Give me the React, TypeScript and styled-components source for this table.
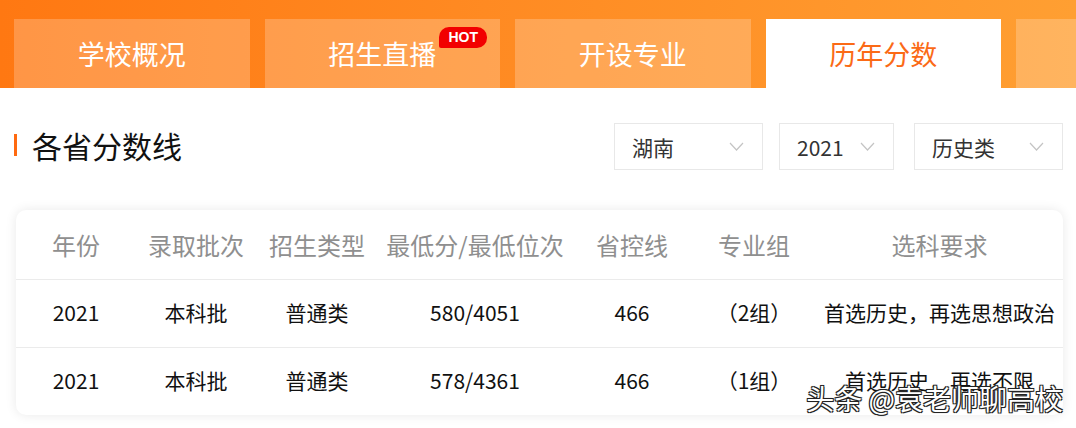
import React from "react";
import styled, { createGlobalStyle } from "styled-components";

const GlobalStyle = createGlobalStyle`
  html, body {
    margin: 0;
    padding: 0;
    background: #fff;
    font-family: "Noto Sans CJK SC", "Noto Sans", sans-serif;
  }
`;

const Page = styled.div`
  position: relative;
  width: 1076px;
  height: 428px;
  overflow: hidden;
  background: #fff;
`;

const TabBar = styled.div`
  display: flex;
  gap: 15px;
  height: 88px;
  padding: 19px 0 0 14px;
  box-sizing: border-box;
  background: linear-gradient(90deg, #ff7812 0%, #ff8a22 45%, #ff9f32 100%);
  overflow: hidden;
`;

const Tab = styled.div<{ $active?: boolean }>`
  position: relative;
  flex: 0 0 235.5px;
  display: flex;
  align-items: center;
  justify-content: center;
  font-size: 27px;
  color: ${(p) => (p.$active ? "#fb6a16" : "#fff")};
  background: ${(p) => (p.$active ? "#fff" : "rgba(255, 255, 255, 0.22)")};
`;

const Hot = styled.span`
  position: absolute;
  top: 8px;
  right: 13px;
  padding: 0 9px;
  height: 21px;
  line-height: 21px;
  font-family: "Liberation Sans", Arial, sans-serif;
  font-weight: 700;
  font-size: 14px;
  color: #fff;
  background: #f20000;
  border-radius: 10px 10px 10px 2px;
`;

const Section = styled.div`
  padding: 35px 13px 0 14px;
`;

const HeadRow = styled.div`
  display: flex;
  align-items: center;
  height: 47px;
`;

const Title = styled.h2`
  flex: 1;
  margin: -4px 0 0;
  display: flex;
  align-items: center;
  gap: 15px;
  font-size: 30px;
  font-weight: 400;
  color: #111;
  &::before {
    content: "";
    width: 3px;
    height: 22px;
    background: #ff6a10;
  }
`;

const Filters = styled.div`
  display: flex;
  gap: 16px;
`;

const Select = styled.div<{ $w: number; $gap?: number }>`
  width: ${(p) => p.$w}px;
  height: 47px;
  margin-left: ${(p) => p.$gap ?? 0}px;
  box-sizing: border-box;
  border: 1px solid #e8e8e8;
  display: flex;
  align-items: center;
  justify-content: space-between;
  padding: 0 18px 0 17px;
  font-size: 21px;
  color: #333;
`;

const Chevron = () => (
  <svg width="15" height="9" viewBox="0 0 15 9" fill="none">
    <path d="M1 1l6.5 7L14 1" stroke="#c4c4c4" strokeWidth="1.2" />
  </svg>
);

const Card = styled.div`
  margin: 40px 0 0 2px;
  width: 1047px;
  background: #fff;
  border-radius: 10px;
  box-shadow: 0 0 12px rgba(0, 0, 0, 0.09);
  overflow: hidden;
`;

const Row = styled.div<{ $head?: boolean }>`
  display: grid;
  grid-template-columns: 120px 120px 122px 194px 120px 124px 1fr;
  align-items: center;
  height: ${(p) => (p.$head ? 69 : 68)}px;
  padding-bottom: ${(p) => (p.$head ? 0 : 3)}px;
  box-sizing: border-box;
  border-top: ${(p) => (p.$head ? "none" : "1px solid #ebebeb")};
  font-size: ${(p) => (p.$head ? 24 : 21)}px;
  color: ${(p) => (p.$head ? "#8f8f8f" : "#111")};
`;

const Cell = styled.div`
  text-align: center;
  white-space: nowrap;
`;

const Watermark = styled.div`
  position: absolute;
  right: 13px;
  bottom: 10px;
  font-size: 28px;
  color: #fff;
  text-shadow: -1px -1px 0 #222, 1px -1px 0 #222, -1px 1px 0 #222, 1px 1px 0 #222,
    0 0 2px #000;
`;

const tabs = ["学校概况", "招生直播", "开设专业", "历年分数", ""];
const heads = ["年份", "录取批次", "招生类型", "最低分/最低位次", "省控线", "专业组", "选科要求"];
const rows = [
  ["2021", "本科批", "普通类", "580/4051", "466", "（2组）", "首选历史，再选思想政治"],
  ["2021", "本科批", "普通类", "578/4361", "466", "（1组）", "首选历史，再选不限"],
];

export default function App() {
  return (
    <Page>
      <GlobalStyle />
      <TabBar>
        {tabs.map((t, i) => (
          <Tab key={i} $active={i === 3}>
            {t}
            {i === 1 && <Hot>HOT</Hot>}
          </Tab>
        ))}
      </TabBar>
      <Section>
        <HeadRow>
          <Title>各省分数线</Title>
          <Filters>
            <Select $w={149}>
              湖南
              <Chevron />
            </Select>
            <Select $w={115}>
              2021
              <Chevron />
            </Select>
            <Select $w={149} $gap={4}>
              历史类
              <Chevron />
            </Select>
          </Filters>
        </HeadRow>
        <Card>
          <Row $head>
            {heads.map((h) => (
              <Cell key={h}>{h}</Cell>
            ))}
          </Row>
          {rows.map((r, i) => (
            <Row key={i}>
              {r.map((c, j) => (
                <Cell key={j}>{c}</Cell>
              ))}
            </Row>
          ))}
        </Card>
      </Section>
      <Watermark>头条 @袁老师聊高校</Watermark>
    </Page>
  );
}
